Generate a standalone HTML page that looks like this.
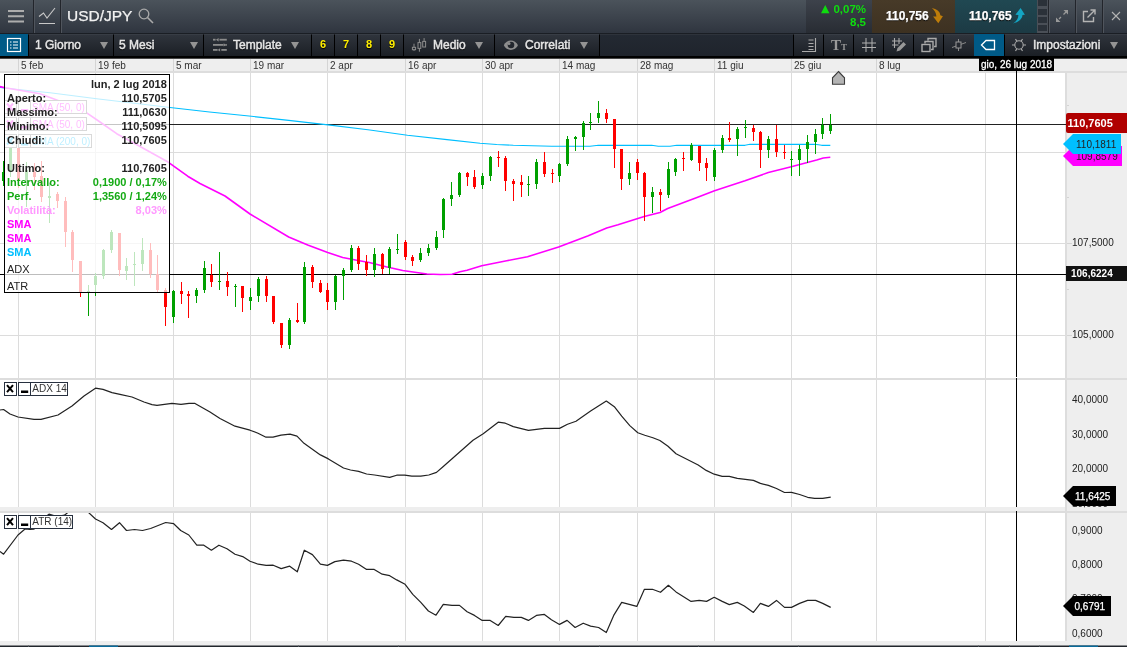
<!DOCTYPE html>
<html><head><meta charset="utf-8"><title>USD/JPY</title>
<style>
html,body{margin:0;padding:0;background:#fff;}
body{width:1127px;height:647px;overflow:hidden;position:relative;font-family:"Liberation Sans",Arial,sans-serif;}
#top{position:absolute;left:0;top:0;width:1127px;height:33px;background:linear-gradient(#4b535b,#2f353f);}
#tb{position:absolute;left:0;top:33px;width:1127px;height:26px;background:#000;border-top:1px solid #1a1e24;box-sizing:border-box;}
#tb:before{content:'';position:absolute;left:0;top:0;width:1127px;height:22px;background:#222831;border-top:1px solid #2e333b;box-sizing:border-box;}
.a{position:absolute;}
div.a,.lbl{will-change:transform;}
.vs{position:absolute;top:0;width:1px;height:33px;background:#22252b;box-shadow:1px 0 0 #50555d;}
.btn{position:absolute;top:0;height:22px;background:linear-gradient(#2f343c,#1b1f25);border-left:1px solid #000;border-top:1px solid #383d45;box-sizing:border-box;}
.btn>*{margin-top:-1px;}
.lbl{position:absolute;top:0;line-height:22px;font-size:12px;color:#e6e6e6;-webkit-text-stroke:0.45px #e6e6e6;text-shadow:0 1px 1px #000;white-space:nowrap;}
.tri{position:absolute;top:8px;margin-left:-1px;width:0;height:0;border-left:4px solid transparent;border-right:4px solid transparent;border-top:7px solid #949494;}
.y{color:#ffee00;font-size:11px;font-weight:bold;-webkit-text-stroke:0;text-align:center;line-height:21px;}
</style></head><body>
<div id="top">
 <svg class="a" style="left:0;top:0" width="130" height="33" viewBox="0 0 130 33">
  <g stroke="#adadad" stroke-width="2"><path d="M8 11H24M8 16.300H24M8 21.600H24"/></g>
  <g stroke="#c8c8c8" stroke-width="1.1" fill="none"><path d="M39 16.5l4.5-3.5 3.5 5 8-10M39 23.5h16"/></g>
 </svg>
 <div class="vs" style="left:33px"></div><div class="vs" style="left:60px"></div>
 <div class="a" style="left:67px;top:4px;font-size:15.5px;line-height:24px;color:#f2f2f2;-webkit-text-stroke:0.25px #f2f2f2">USD/JPY</div>
 <svg class="a" style="left:136px;top:6px" width="20" height="20" viewBox="0 0 20 20"><circle cx="8" cy="8" r="4.8" fill="none" stroke="#aaa" stroke-width="1.3"/><path d="M11.5 11.5L17 17" stroke="#aaa" stroke-width="1.6"/></svg>
 <div class="a" style="left:806px;top:0;width:66px;height:33px;background:linear-gradient(#3d424b,#282c33);"></div>
 <div class="a" style="left:806px;top:2px;width:60px;text-align:right;font-size:11.5px;font-weight:bold;color:#0fdc0f;line-height:14px;letter-spacing:0">0,07%</div>
 <div class="a" style="left:806px;top:14.700px;width:60px;text-align:right;font-size:11.5px;font-weight:bold;color:#0fdc0f;line-height:14px;letter-spacing:0">8,5</div>
 <div class="a" style="left:820.700px;top:1.800px;font-size:11px;line-height:14px;color:#0fdc0f;font-family:'DejaVu Sans',sans-serif">▲</div>
 <div class="a" style="left:871.500px;top:0;width:83px;height:33px;background:linear-gradient(#473a28,#3d3121);"></div>
 <div class="a" style="left:886px;top:7.700px;font-size:12px;line-height:16px;font-weight:bold;color:#fff;-webkit-text-stroke:0.25px #fff;text-shadow:0 1px 1px #000">110,756</div>
 <svg class="a" style="left:930px;top:6px" width="16" height="20" viewBox="0 0 16 20"><path d="M1.800 2.100C6.500 3 10 5.500 10.300 9.300L12.900 10.300L8.300 17.200L3.100 10.500L6.400 10.500C6.300 7 4.500 4.300 1.800 2.100Z" fill="#be7d0a"/></svg>
 <div class="a" style="left:954.500px;top:0;width:81.800px;height:33px;background:linear-gradient(#204852,#1c3a44);"></div>
 <div class="a" style="left:968.600px;top:7.700px;font-size:12px;line-height:16px;font-weight:bold;color:#fff;-webkit-text-stroke:0.25px #fff;text-shadow:0 1px 1px #000">110,765</div>
 <svg class="a" style="left:1012px;top:6px" width="16" height="20" viewBox="0 0 16 20"><path d="M8.600 2.100L12.900 8.800L10.500 9C10.300 13 6.500 16.200 1 17.400C4.500 15.300 6.400 12.500 6.400 9L3.400 8.800Z" fill="#14a5c3"/></svg>
 <div class="a" style="left:1037px;top:0;width:11px;height:33px;background:#4a4f57;"></div>
 <div class="a" style="left:1038px;top:0;width:9px;height:6px;background:#2b3139"></div>
 <div class="a" style="left:1038px;top:9px;width:9px;height:6px;background:#2b3139"></div>
 <div class="a" style="left:1038px;top:17px;width:9px;height:6px;background:#2b3139"></div>
 <div class="a" style="left:1038px;top:25px;width:9px;height:6px;background:#2b3139"></div>
 <div class="vs" style="left:1048px"></div><div class="vs" style="left:1075px"></div><div class="vs" style="left:1102px"></div>
 <svg class="a" style="left:1050px;top:0" width="77" height="33" viewBox="1050 0 77 33" fill="none" stroke="#b4b4b4" stroke-width="1.4">
  <path d="M1063.500 14.500L1066 12M1059 19L1061 17" stroke="#999" stroke-width="1.3"/><path d="M1063.500 10h4.500v4.500zM1056 17.500v4.500h4.500z" fill="#999" stroke="none"/>
  <path d="M1088 11.5h-4.5v10h10V17" /><path d="M1087.5 17.5L1095 10M1090.500 10h4.500v4.500"/>
  <path d="M1112 12l8 8m0-8l-8 8" stroke-width="1.1"/>
 </svg>
</div>
<div id="tb">
 <div class="a" style="left:0;top:0;width:28px;height:22px;background:#005a87"></div>
 <svg class="a" style="left:6px;top:3px" width="16" height="16" viewBox="0 0 16 16"><rect x="1.5" y="1.5" width="13" height="13" fill="none" stroke="#fff" stroke-width="1.2"/><path d="M4 5h1.500M7 5h5M4 8h1.500M7 8h5M4 11h1.500M7 11h5" stroke="#fff" stroke-width="1.2"/></svg>
 <div class="btn" style="left:28px;width:85px"><div class="lbl" style="left:6px">1 Giorno</div><div class="tri" style="left:72px"></div></div>
 <div class="btn" style="left:113px;width:90px"><div class="lbl" style="left:5px">5 Mesi</div><div class="tri" style="left:77px"></div></div>
 <div class="btn" style="left:203px;width:108px">
  <svg class="a" style="left:7px;top:3px" width="17" height="16" viewBox="210 37 17 16" fill="#8c8c8c"><rect x="212" y="38.800" width="2.600" height="1.800"/><path d="M214.900 39.700l2.700-1.700v3.400z"/><rect x="218.500" y="38.800" width="7.300" height="1.800"/>
   <rect x="212" y="44" width="10.500" height="1.800"/><path d="M225.300 44.900l-2.700-1.700v3.400z"/><rect x="224.500" y="44" width="1.300" height="1.800"/>
   <rect x="212" y="49" width="4.600" height="1.800"/><path d="M216.700 49.900l2.400-1.700v3.400z"/><rect x="220.300" y="49" width="5.500" height="1.800"/></svg>
  <div class="lbl" style="left:29px">Template</div><div class="tri" style="left:88px"></div></div>
 <div class="btn" style="left:311px;width:23px"><div class="lbl y" style="left:0;width:22px">6</div></div>
 <div class="btn" style="left:334px;width:23px"><div class="lbl y" style="left:0;width:22px">7</div></div>
 <div class="btn" style="left:357px;width:23px"><div class="lbl y" style="left:0;width:22px">8</div></div>
 <div class="btn" style="left:380px;width:23px"><div class="lbl y" style="left:0;width:22px">9</div></div>
 <div class="btn" style="left:403px;width:91px">
  <svg class="a" style="left:6px;top:3px" width="18" height="16" viewBox="409 37 18 16" stroke="#8c8c8c" stroke-width="1" fill="none"><path d="M413 43.700v7.200M418.400 38.900v12.800M423.100 38.100v9"/><rect x="411.400" y="47.300" width="3.200" height="2.400" fill="#252a31"/><rect x="417" y="42.600" width="2.800" height="5.800" fill="#252a31"/><rect x="421.700" y="41.400" width="2.900" height="5.600" fill="#252a31"/></svg>
  <div class="lbl" style="left:29px">Medio</div><div class="tri" style="left:72px"></div></div>
 <div class="btn" style="left:494px;width:105px">
  <svg class="a" style="left:8px;top:5px" width="16" height="13" viewBox="502 39 16 13"><path d="M502.800 45.300C505.500 39 514.200 39 516.900 45.300C514.200 51.500 505.500 51.500 502.800 45.300Z" fill="#8e8e8e"/><circle cx="510" cy="45" r="3.300" fill="#23272e"/><circle cx="508" cy="43.400" r="1.500" fill="#8e8e8e"/></svg>
  <div class="lbl" style="left:30px">Correlati</div><div class="tri" style="left:86px"></div></div>
 <div class="btn" style="left:599px;width:194px;background:linear-gradient(#232932,#1f242c);border-top-color:#2e333b"></div>
 <div class="btn" style="left:793px;width:30px"><svg class="a" style="left:6px;top:3px" width="18" height="16" viewBox="0 0 18 16" stroke="#aaa" stroke-width="1.1" fill="none"><path d="M8.500 3h5M8.500 6.500h5M8.500 9.500h5M8.500 12.500h5M15.500 1v13.500H2"/></svg></div>
 <div class="btn" style="left:823px;width:30px"><div class="a" style="left:7px;top:2px;font-family:'Liberation Serif',serif;font-weight:bold;color:#9a9a9a;font-size:15px;line-height:18px">T<span style="font-size:9px">T</span></div></div>
 <div class="btn" style="left:853px;width:30px"><svg class="a" style="left:7px;top:3px" width="16" height="16" viewBox="0 0 16 16" stroke="#b0b0b0" stroke-width="1" fill="none"><path d="M5 1v14M11 1v14M1 6h14M1 10.500h14"/></svg></div>
 <div class="btn" style="left:883px;width:30px"><svg class="a" style="left:7px;top:3px" width="17" height="16" viewBox="0 0 17 16" stroke="#aaa" stroke-width="1.1" fill="none"><path d="M3.500 1v10M8 1v6M1 4h10M1 8h6.500"/><path d="M5.500 14.500l1-3.500 6-6 2.500 2.500-6 6z" fill="#999" stroke="none"/></svg></div>
 <div class="btn" style="left:913px;width:30px"><svg class="a" style="left:7px;top:3px" width="17" height="16" viewBox="0 0 17 16" stroke="#aaa" stroke-width="1.4" fill="none"><path d="M7 3.500V1.500h8v8h-2M4 6.500V4.500h8v8h-2"/><rect x="1" y="7.500" width="8" height="7"/></svg></div>
 <div class="btn" style="left:943px;width:31px"><svg class="a" style="left:7px;top:3px" width="17" height="16" viewBox="0 0 17 16" stroke="#999" stroke-width="1" fill="none"><path d="M7.500 2v12M1 10.500L15 5.500" stroke="#888"/><rect x="5" y="5" width="5" height="6" fill="#252930"/></svg></div>
 <div class="a" style="left:974px;top:0;width:30px;height:22px;background:#005a87"></div>
 <svg class="a" style="left:980px;top:5px" width="17" height="12" viewBox="0 0 17 12"><path d="M1.500 6L6 1.500h8.500v9H6z" fill="none" stroke="#fff" stroke-width="1.3"/></svg>
 <div class="btn" style="left:1004px;width:123px">
  <svg class="a" style="left:6px;top:3px" width="16" height="16" viewBox="0 0 16 16" stroke="#aaa" stroke-width="1.1" fill="none"><circle cx="8" cy="8" r="4.200"/><path d="M1 8h2.800M12.200 8h2.800M4.500 2l1.400 2.400M10.100 11.600l1.400 2.400M4.500 14l1.400-2.400M10.100 4.400l1.400-2.400"/></svg>
  <div class="lbl" style="left:28px">Impostazioni</div><div class="tri" style="left:106px"></div></div>
</div>
<svg id="chart" width="1127" height="647" viewBox="0 0 1127 647" style="position:absolute;left:0;top:0;will-change:transform" font-family="Liberation Sans, Arial, sans-serif">
<rect x="0" y="58" width="1127" height="589" fill="#fff"/>
<rect x="0" y="58" width="1127" height="13" fill="#eee"/><rect x="0" y="58" width="1127" height="1" fill="#474747"/>
<rect x="0" y="71" width="1127" height="2" fill="#ddd"/>
<rect x="18" y="59" width="1" height="12" fill="#d4d4d4"/>
<rect x="18" y="73" width="1" height="568" fill="#dcdcdc"/>
<rect x="95" y="59" width="1" height="12" fill="#d4d4d4"/>
<rect x="95" y="73" width="1" height="568" fill="#dcdcdc"/>
<rect x="173" y="59" width="1" height="12" fill="#d4d4d4"/>
<rect x="173" y="73" width="1" height="568" fill="#dcdcdc"/>
<rect x="250" y="59" width="1" height="12" fill="#d4d4d4"/>
<rect x="250" y="73" width="1" height="568" fill="#dcdcdc"/>
<rect x="327" y="59" width="1" height="12" fill="#d4d4d4"/>
<rect x="327" y="73" width="1" height="568" fill="#dcdcdc"/>
<rect x="405" y="59" width="1" height="12" fill="#d4d4d4"/>
<rect x="405" y="73" width="1" height="568" fill="#dcdcdc"/>
<rect x="482" y="59" width="1" height="12" fill="#d4d4d4"/>
<rect x="482" y="73" width="1" height="568" fill="#dcdcdc"/>
<rect x="559" y="59" width="1" height="12" fill="#d4d4d4"/>
<rect x="559" y="73" width="1" height="568" fill="#dcdcdc"/>
<rect x="637" y="59" width="1" height="12" fill="#d4d4d4"/>
<rect x="637" y="73" width="1" height="568" fill="#dcdcdc"/>
<rect x="714" y="59" width="1" height="12" fill="#d4d4d4"/>
<rect x="714" y="73" width="1" height="568" fill="#dcdcdc"/>
<rect x="791" y="59" width="1" height="12" fill="#d4d4d4"/>
<rect x="791" y="73" width="1" height="568" fill="#dcdcdc"/>
<rect x="876" y="59" width="1" height="12" fill="#d4d4d4"/>
<rect x="876" y="73" width="1" height="568" fill="#dcdcdc"/>
<rect x="985" y="59" width="1" height="12" fill="#d4d4d4"/>
<rect x="985" y="73" width="1" height="568" fill="#dcdcdc"/>
<rect x="0" y="152" width="1065" height="1" fill="#dcdcdc"/>
<rect x="0" y="243" width="1065" height="1" fill="#dcdcdc"/>
<rect x="0" y="335" width="1065" height="1" fill="#dcdcdc"/>
<text x="21" y="68.5" font-size="10" fill="#333">5 feb</text>
<text x="98" y="68.5" font-size="10" fill="#333">19 feb</text>
<text x="176" y="68.5" font-size="10" fill="#333">5 mar</text>
<text x="253" y="68.5" font-size="10" fill="#333">19 mar</text>
<text x="330" y="68.5" font-size="10" fill="#333">2 apr</text>
<text x="408" y="68.5" font-size="10" fill="#333">16 apr</text>
<text x="485" y="68.5" font-size="10" fill="#333">30 apr</text>
<text x="562" y="68.5" font-size="10" fill="#333">14 mag</text>
<text x="640" y="68.5" font-size="10" fill="#333">28 mag</text>
<text x="717" y="68.5" font-size="10" fill="#333">11 giu</text>
<text x="794" y="68.5" font-size="10" fill="#333">25 giu</text>
<text x="879" y="68.5" font-size="10" fill="#333">8 lug</text>
<rect x="0" y="124" width="1066" height="1" fill="#222"/>
<rect x="0" y="274" width="1066" height="1" fill="#000"/>
<polyline points="0.0,87.5 25.0,90.3 50.0,92.8 96.7,98.7 170.0,107.5 209.5,112.0 249.0,116.0 288.7,120.4 328.0,124.9 368.0,129.8 407.5,135.2 447.0,139.6 480.0,143.3 496.7,144.5 513.3,145.3 551.7,146.2 590.0,146.2 598.3,145.3 651.7,145.3 658.3,146.2 670.0,146.2 676.7,145.3 745.0,145.3 750.0,144.3 815.0,144.3 821.7,145.3 830.3,145.3" fill="none" stroke="#00bfff" stroke-width="1.15" stroke-linejoin="round" />
<polyline points="0.0,86.6 5.0,87.8 40.0,93.7 66.7,103.7 86.7,112.8 100.0,122.0 116.7,133.7 133.3,142.8 150.0,152.0 166.7,161.2 187.7,176.2 200.0,183.5 225.0,196.0 250.0,214.0 288.7,237.0 307.7,245.0 327.7,252.5 342.7,257.5 358.0,260.5 369.3,262.5 386.0,266.7 402.7,270.5 418.3,272.8 427.0,274.0 440.0,274.5 452.0,274.2 460.0,271.7 467.0,270.2 481.7,265.8 506.7,260.8 527.5,256.7 558.6,247.0 588.3,235.7 606.7,228.0 618.0,224.8 644.2,216.5 660.0,212.5 667.7,208.5 697.0,197.6 714.5,190.8 745.0,180.8 768.3,172.5 791.3,166.7 816.7,160.0 823.3,158.0 830.3,157.3" fill="none" stroke="#ff00ff" stroke-width="1.6" stroke-linejoin="round" />
<g shape-rendering="crispEdges">
<rect x="3" y="161" width="1" height="25" fill="#00a000"/><rect x="2" y="172" width="3" height="9" fill="#00a000"/>
<rect x="10" y="146" width="1" height="31" fill="#00a000"/><rect x="9" y="148" width="3" height="24" fill="#00a000"/>
<rect x="18" y="148" width="1" height="40" fill="#ff0000"/><rect x="17" y="148" width="3" height="32" fill="#ff0000"/>
<rect x="26" y="162" width="1" height="45" fill="#00a000"/><rect x="25" y="170" width="3" height="13" fill="#00a000"/>
<rect x="34" y="163" width="1" height="27" fill="#ff0000"/><rect x="33" y="172" width="3" height="5" fill="#ff0000"/>
<rect x="41" y="161" width="1" height="41" fill="#ff0000"/><rect x="40" y="176" width="3" height="21" fill="#ff0000"/>
<rect x="49" y="183" width="1" height="40" fill="#00a000"/><rect x="48" y="196" width="3" height="2" fill="#00a000"/>
<rect x="57" y="192" width="1" height="16" fill="#ff0000"/><rect x="56" y="194" width="3" height="7" fill="#ff0000"/>
<rect x="65" y="197" width="1" height="50" fill="#ff0000"/><rect x="64" y="201" width="3" height="31" fill="#ff0000"/>
<rect x="72" y="230" width="1" height="42" fill="#ff0000"/><rect x="71" y="232" width="3" height="28" fill="#ff0000"/>
<rect x="80" y="261" width="1" height="36" fill="#ff0000"/><rect x="79" y="261" width="3" height="32" fill="#ff0000"/>
<rect x="88" y="285" width="1" height="31" fill="#00a000"/><rect x="87" y="291" width="3" height="1" fill="#00a000"/>
<rect x="95" y="273" width="1" height="23" fill="#00a000"/><rect x="94" y="276" width="3" height="9" fill="#00a000"/>
<rect x="103" y="249" width="1" height="30" fill="#00a000"/><rect x="102" y="250" width="3" height="26" fill="#00a000"/>
<rect x="111" y="230" width="1" height="23" fill="#00a000"/><rect x="110" y="232" width="3" height="18" fill="#00a000"/>
<rect x="119" y="233" width="1" height="43" fill="#ff0000"/><rect x="118" y="233" width="3" height="37" fill="#ff0000"/>
<rect x="126" y="258" width="1" height="22" fill="#00a000"/><rect x="125" y="266" width="3" height="5" fill="#00a000"/>
<rect x="134" y="252" width="1" height="34" fill="#00a000"/><rect x="133" y="264" width="3" height="1" fill="#00a000"/>
<rect x="142" y="238" width="1" height="33" fill="#00a000"/><rect x="141" y="250" width="3" height="14" fill="#00a000"/>
<rect x="150" y="243" width="1" height="35" fill="#ff0000"/><rect x="149" y="250" width="3" height="24" fill="#ff0000"/>
<rect x="157" y="255" width="1" height="37" fill="#ff0000"/><rect x="156" y="274" width="3" height="16" fill="#ff0000"/>
<rect x="165" y="288" width="1" height="38" fill="#ff0000"/><rect x="164" y="290" width="3" height="17" fill="#ff0000"/>
<rect x="173" y="290" width="1" height="33" fill="#00a000"/><rect x="172" y="291" width="3" height="26" fill="#00a000"/>
<rect x="181" y="282" width="1" height="22" fill="#ff0000"/><rect x="180" y="291" width="3" height="3" fill="#ff0000"/>
<rect x="188" y="291" width="1" height="27" fill="#ff0000"/><rect x="187" y="294" width="3" height="2" fill="#ff0000"/>
<rect x="196" y="288" width="1" height="15" fill="#00a000"/><rect x="195" y="290" width="3" height="6" fill="#00a000"/>
<rect x="204" y="261" width="1" height="32" fill="#00a000"/><rect x="203" y="268" width="3" height="22" fill="#00a000"/>
<rect x="211" y="264" width="1" height="23" fill="#ff0000"/><rect x="210" y="275" width="3" height="7" fill="#ff0000"/>
<rect x="219" y="252" width="1" height="38" fill="#00a000"/><rect x="218" y="281" width="3" height="1" fill="#00a000"/>
<rect x="227" y="272" width="1" height="24" fill="#ff0000"/><rect x="226" y="281" width="3" height="6" fill="#ff0000"/>
<rect x="235" y="284" width="1" height="23" fill="#00a000"/><rect x="234" y="286" width="3" height="1" fill="#00a000"/>
<rect x="242" y="286" width="1" height="26" fill="#ff0000"/><rect x="241" y="286" width="3" height="12" fill="#ff0000"/>
<rect x="250" y="288" width="1" height="22" fill="#00a000"/><rect x="249" y="297" width="3" height="4" fill="#00a000"/>
<rect x="258" y="277" width="1" height="25" fill="#00a000"/><rect x="257" y="279" width="3" height="17" fill="#00a000"/>
<rect x="266" y="276" width="1" height="26" fill="#ff0000"/><rect x="265" y="279" width="3" height="17" fill="#ff0000"/>
<rect x="273" y="296" width="1" height="28" fill="#ff0000"/><rect x="272" y="296" width="3" height="26" fill="#ff0000"/>
<rect x="281" y="323" width="1" height="25" fill="#ff0000"/><rect x="280" y="323" width="3" height="22" fill="#ff0000"/>
<rect x="289" y="318" width="1" height="31" fill="#00a000"/><rect x="288" y="320" width="3" height="25" fill="#00a000"/>
<rect x="297" y="303" width="1" height="20" fill="#ff0000"/><rect x="296" y="320" width="3" height="2" fill="#ff0000"/>
<rect x="304" y="262" width="1" height="62" fill="#00a000"/><rect x="303" y="267" width="3" height="55" fill="#00a000"/>
<rect x="312" y="265" width="1" height="23" fill="#ff0000"/><rect x="311" y="267" width="3" height="15" fill="#ff0000"/>
<rect x="320" y="280" width="1" height="13" fill="#ff0000"/><rect x="319" y="283" width="3" height="9" fill="#ff0000"/>
<rect x="327" y="283" width="1" height="27" fill="#ff0000"/><rect x="326" y="290" width="3" height="12" fill="#ff0000"/>
<rect x="335" y="275" width="1" height="35" fill="#00a000"/><rect x="334" y="276" width="3" height="26" fill="#00a000"/>
<rect x="343" y="268" width="1" height="32" fill="#00a000"/><rect x="342" y="270" width="3" height="6" fill="#00a000"/>
<rect x="351" y="245" width="1" height="27" fill="#00a000"/><rect x="350" y="248" width="3" height="22" fill="#00a000"/>
<rect x="358" y="246" width="1" height="24" fill="#ff0000"/><rect x="357" y="248" width="3" height="16" fill="#ff0000"/>
<rect x="366" y="255" width="1" height="21" fill="#ff0000"/><rect x="365" y="262" width="3" height="8" fill="#ff0000"/>
<rect x="374" y="248" width="1" height="29" fill="#00a000"/><rect x="373" y="254" width="3" height="16" fill="#00a000"/>
<rect x="382" y="253" width="1" height="21" fill="#ff0000"/><rect x="381" y="254" width="3" height="15" fill="#ff0000"/>
<rect x="389" y="247" width="1" height="27" fill="#00a000"/><rect x="388" y="249" width="3" height="19" fill="#00a000"/>
<rect x="397" y="234" width="1" height="20" fill="#00a000"/><rect x="396" y="249" width="3" height="1" fill="#00a000"/>
<rect x="405" y="240" width="1" height="20" fill="#ff0000"/><rect x="404" y="242" width="3" height="15" fill="#ff0000"/>
<rect x="412" y="255" width="1" height="11" fill="#ff0000"/><rect x="411" y="257" width="3" height="4" fill="#ff0000"/>
<rect x="420" y="248" width="1" height="14" fill="#00a000"/><rect x="419" y="253" width="3" height="7" fill="#00a000"/>
<rect x="428" y="244" width="1" height="12" fill="#00a000"/><rect x="427" y="248" width="3" height="5" fill="#00a000"/>
<rect x="436" y="231" width="1" height="19" fill="#00a000"/><rect x="435" y="237" width="3" height="11" fill="#00a000"/>
<rect x="443" y="198" width="1" height="40" fill="#00a000"/><rect x="442" y="199" width="3" height="31" fill="#00a000"/>
<rect x="451" y="182" width="1" height="24" fill="#00a000"/><rect x="450" y="195" width="3" height="4" fill="#00a000"/>
<rect x="459" y="172" width="1" height="25" fill="#00a000"/><rect x="458" y="173" width="3" height="22" fill="#00a000"/>
<rect x="467" y="172" width="1" height="14" fill="#ff0000"/><rect x="466" y="173" width="3" height="4" fill="#ff0000"/>
<rect x="474" y="170" width="1" height="19" fill="#ff0000"/><rect x="473" y="177" width="3" height="10" fill="#ff0000"/>
<rect x="482" y="173" width="1" height="16" fill="#00a000"/><rect x="481" y="176" width="3" height="9" fill="#00a000"/>
<rect x="490" y="156" width="1" height="25" fill="#00a000"/><rect x="489" y="157" width="3" height="19" fill="#00a000"/>
<rect x="498" y="151" width="1" height="16" fill="#ff0000"/><rect x="497" y="157" width="3" height="1" fill="#ff0000"/>
<rect x="505" y="156" width="1" height="35" fill="#ff0000"/><rect x="504" y="158" width="3" height="23" fill="#ff0000"/>
<rect x="513" y="179" width="1" height="22" fill="#ff0000"/><rect x="512" y="181" width="3" height="3" fill="#ff0000"/>
<rect x="521" y="175" width="1" height="22" fill="#ff0000"/><rect x="520" y="182" width="3" height="3" fill="#ff0000"/>
<rect x="528" y="176" width="1" height="20" fill="#00a000"/><rect x="527" y="184" width="3" height="1" fill="#00a000"/>
<rect x="536" y="159" width="1" height="30" fill="#00a000"/><rect x="535" y="162" width="3" height="22" fill="#00a000"/>
<rect x="544" y="152" width="1" height="25" fill="#ff0000"/><rect x="543" y="162" width="3" height="12" fill="#ff0000"/>
<rect x="552" y="169" width="1" height="14" fill="#ff0000"/><rect x="551" y="173" width="3" height="1" fill="#ff0000"/>
<rect x="559" y="163" width="1" height="19" fill="#00a000"/><rect x="558" y="164" width="3" height="12" fill="#00a000"/>
<rect x="567" y="136" width="1" height="30" fill="#00a000"/><rect x="566" y="139" width="3" height="25" fill="#00a000"/>
<rect x="575" y="136" width="1" height="15" fill="#00a000"/><rect x="574" y="137" width="3" height="2" fill="#00a000"/>
<rect x="583" y="121" width="1" height="29" fill="#00a000"/><rect x="582" y="123" width="3" height="14" fill="#00a000"/>
<rect x="590" y="113" width="1" height="17" fill="#00a000"/><rect x="589" y="122" width="3" height="1" fill="#00a000"/>
<rect x="598" y="101" width="1" height="22" fill="#00a000"/><rect x="597" y="113" width="3" height="5" fill="#00a000"/>
<rect x="606" y="109" width="1" height="14" fill="#ff0000"/><rect x="605" y="113" width="3" height="6" fill="#ff0000"/>
<rect x="614" y="119" width="1" height="49" fill="#ff0000"/><rect x="613" y="119" width="3" height="30" fill="#ff0000"/>
<rect x="621" y="149" width="1" height="41" fill="#ff0000"/><rect x="620" y="149" width="3" height="30" fill="#ff0000"/>
<rect x="629" y="162" width="1" height="23" fill="#00a000"/><rect x="628" y="173" width="3" height="6" fill="#00a000"/>
<rect x="637" y="159" width="1" height="21" fill="#ff0000"/><rect x="636" y="162" width="3" height="11" fill="#ff0000"/>
<rect x="644" y="172" width="1" height="49" fill="#ff0000"/><rect x="643" y="173" width="3" height="24" fill="#ff0000"/>
<rect x="652" y="187" width="1" height="26" fill="#00a000"/><rect x="651" y="192" width="3" height="5" fill="#00a000"/>
<rect x="660" y="189" width="1" height="22" fill="#ff0000"/><rect x="659" y="192" width="3" height="3" fill="#ff0000"/>
<rect x="668" y="162" width="1" height="36" fill="#00a000"/><rect x="667" y="169" width="3" height="26" fill="#00a000"/>
<rect x="675" y="158" width="1" height="18" fill="#00a000"/><rect x="674" y="159" width="3" height="13" fill="#00a000"/>
<rect x="683" y="152" width="1" height="19" fill="#ff0000"/><rect x="682" y="158" width="3" height="1" fill="#ff0000"/>
<rect x="691" y="143" width="1" height="18" fill="#00a000"/><rect x="690" y="145" width="3" height="15" fill="#00a000"/>
<rect x="699" y="146" width="1" height="25" fill="#ff0000"/><rect x="698" y="146" width="3" height="17" fill="#ff0000"/>
<rect x="706" y="158" width="1" height="23" fill="#ff0000"/><rect x="705" y="163" width="3" height="5" fill="#ff0000"/>
<rect x="714" y="148" width="1" height="33" fill="#00a000"/><rect x="713" y="150" width="3" height="27" fill="#00a000"/>
<rect x="722" y="135" width="1" height="18" fill="#00a000"/><rect x="721" y="138" width="3" height="12" fill="#00a000"/>
<rect x="729" y="122" width="1" height="20" fill="#ff0000"/><rect x="728" y="138" width="3" height="2" fill="#ff0000"/>
<rect x="737" y="127" width="1" height="29" fill="#00a000"/><rect x="736" y="129" width="3" height="10" fill="#00a000"/>
<rect x="745" y="120" width="1" height="18" fill="#00a000"/><rect x="744" y="127" width="3" height="1" fill="#00a000"/>
<rect x="753" y="125" width="1" height="16" fill="#ff0000"/><rect x="752" y="128" width="3" height="4" fill="#ff0000"/>
<rect x="760" y="131" width="1" height="37" fill="#ff0000"/><rect x="759" y="132" width="3" height="18" fill="#ff0000"/>
<rect x="768" y="136" width="1" height="22" fill="#00a000"/><rect x="767" y="139" width="3" height="11" fill="#00a000"/>
<rect x="776" y="125" width="1" height="32" fill="#ff0000"/><rect x="775" y="139" width="3" height="13" fill="#ff0000"/>
<rect x="784" y="145" width="1" height="14" fill="#ff0000"/><rect x="783" y="152" width="3" height="1" fill="#ff0000"/>
<rect x="791" y="151" width="1" height="25" fill="#00a000"/><rect x="790" y="159" width="3" height="1" fill="#00a000"/>
<rect x="799" y="145" width="1" height="31" fill="#00a000"/><rect x="798" y="149" width="3" height="11" fill="#00a000"/>
<rect x="807" y="135" width="1" height="28" fill="#00a000"/><rect x="806" y="142" width="3" height="7" fill="#00a000"/>
<rect x="815" y="129" width="1" height="25" fill="#00a000"/><rect x="814" y="134" width="3" height="8" fill="#00a000"/>
<rect x="822" y="118" width="1" height="21" fill="#00a000"/><rect x="821" y="125" width="3" height="9" fill="#00a000"/>
<rect x="830" y="114" width="1" height="20" fill="#00a000"/><rect x="829" y="125" width="3" height="6" fill="#00a000"/>
</g>
<path d="M838.5 71.500 L844.500 77.800 V84.200 H832.500 V77.800 Z" fill="#b4b4b4" stroke="#3c3c3c" stroke-width="1.1"/>
<g font-size="10" fill="#ff00ff"><rect x="4.5" y="100.5" width="12" height="13" fill="#fff" stroke="#6e6e6e"/><rect x="18.5" y="100.5" width="12" height="13" fill="#fff" stroke="#6e6e6e"/><rect x="30.5" y="100.5" width="56" height="13" fill="#fff" stroke="#6e6e6e"/><path d="M7 103.5 l6 7 m0 -7 l-6 7" stroke="#ff00ff" stroke-width="2" fill="none"/><rect x="21" y="109" width="7.200" height="2.500"/><text x="32" y="110.5">SMA (50, 0)</text></g>
<g font-size="10" fill="#ff00ff"><rect x="4.5" y="117.5" width="12" height="13" fill="#fff" stroke="#6e6e6e"/><rect x="18.5" y="117.5" width="12" height="13" fill="#fff" stroke="#6e6e6e"/><rect x="30.5" y="117.5" width="56" height="13" fill="#fff" stroke="#6e6e6e"/><path d="M7 120.5 l6 7 m0 -7 l-6 7" stroke="#ff00ff" stroke-width="2" fill="none"/><rect x="21" y="126" width="7.200" height="2.500"/><text x="32" y="127.5">SMA (50, 0)</text></g>
<g font-size="10" fill="#00bfff"><rect x="4.5" y="134.5" width="12" height="13" fill="#fff" stroke="#6e6e6e"/><rect x="18.5" y="134.5" width="12" height="13" fill="#fff" stroke="#6e6e6e"/><rect x="30.5" y="134.5" width="61" height="13" fill="#fff" stroke="#6e6e6e"/><path d="M7 137.5 l6 7 m0 -7 l-6 7" stroke="#00bfff" stroke-width="2" fill="none"/><rect x="21" y="143" width="7.200" height="2.500"/><text x="32" y="144.5">SMA (200, 0)</text></g>
<rect x="4.5" y="74.5" width="165" height="218" fill="#fff" fill-opacity="0.74" stroke="#000" stroke-width="1"/>
<g font-size="11" font-weight="bold">
<text x="166.800" y="87.5" fill="#222" text-anchor="end">lun, 2 lug 2018</text>
<text x="7" y="101.5" fill="#222">Aperto:</text>
<text x="166.800" y="101.5" fill="#222" text-anchor="end">110,5705</text>
<text x="7" y="115.5" fill="#222">Massimo:</text>
<text x="166.800" y="115.5" fill="#222" text-anchor="end">111,0630</text>
<text x="7" y="129.5" fill="#222">Minimo:</text>
<text x="166.800" y="129.5" fill="#222" text-anchor="end">110,5095</text>
<text x="7" y="143.5" fill="#222">Chiudi:</text>
<text x="166.800" y="143.5" fill="#222" text-anchor="end">110,7605</text>
<text x="7" y="171.5" fill="#222">Ultimo:</text>
<text x="166.800" y="171.5" fill="#222" text-anchor="end">110,7605</text>
<text x="7" y="185.5" fill="#14aa14">Intervallo:</text>
<text x="166.800" y="185.5" fill="#14aa14" text-anchor="end">0,1900 / 0,17%</text>
<text x="7" y="199.5" fill="#14aa14">Perf.</text>
<text x="166.800" y="199.5" fill="#14aa14" text-anchor="end">1,3560 / 1,24%</text>
<text x="7" y="213.5" fill="#ff99ff">Volatilità:</text>
<text x="166.800" y="213.5" fill="#ff99ff" text-anchor="end">8,03%</text>
<text x="7" y="227.5" fill="#ff00ff">SMA</text>
<text x="7" y="241.5" fill="#ff00ff">SMA</text>
<text x="7" y="255.5" fill="#00bfff">SMA</text>
</g>
<text x="7" y="273" font-size="11" fill="#222">ADX</text><text x="7" y="290" font-size="11" fill="#222">ATR</text>
<rect x="0" y="378" width="1127" height="2" fill="#ddd"/>
<rect x="0" y="507" width="1127" height="4" fill="#eee"/><rect x="0" y="511" width="1127" height="2" fill="#ddd"/>
<rect x="0" y="641" width="1127" height="5" fill="#eee"/><rect x="0" y="646" width="1127" height="1" fill="#22262c"/>
<rect x="0" y="645.500" width="1127" height="1.500" fill="#22262c"/><rect x="89" y="645.500" width="29" height="1.500" fill="#0a6a99"/><rect x="1069" y="645.500" width="29" height="1.500" fill="#0a6a99"/>
<rect x="28" y="645.500" width="1" height="1.500" fill="#50555c"/>
<rect x="59" y="645.500" width="1" height="1.500" fill="#50555c"/>
<rect x="298" y="645.500" width="1" height="1.500" fill="#50555c"/>
<rect x="398" y="645.500" width="1" height="1.500" fill="#50555c"/>
<rect x="599" y="645.500" width="1" height="1.500" fill="#50555c"/>
<rect x="698" y="645.500" width="1" height="1.500" fill="#50555c"/>
<rect x="798" y="645.500" width="1" height="1.500" fill="#50555c"/>
<rect x="978" y="645.500" width="1" height="1.500" fill="#50555c"/>
<rect x="1009" y="645.500" width="1" height="1.500" fill="#50555c"/>
<rect x="1039" y="645.500" width="1" height="1.500" fill="#50555c"/>
<clipPath id="c1"><rect x="0" y="380" width="1065" height="127"/></clipPath><clipPath id="c2"><rect x="0" y="513" width="1065" height="128"/></clipPath>
<polyline points="0.0,410.0 3.6,409.5 10.0,414.0 18.0,417.0 34.0,419.4 41.0,419.4 58.0,415.0 72.0,406.0 84.0,396.0 95.5,388.2 103.0,389.4 112.0,392.6 120.0,394.4 132.0,397.0 144.0,402.0 152.0,404.6 157.0,405.4 172.0,403.4 181.0,404.4 189.0,403.4 195.0,403.4 210.0,412.0 220.0,418.5 235.0,426.2 250.0,430.2 258.0,433.2 266.0,437.2 273.0,437.2 281.0,435.2 290.0,434.2 297.0,436.2 304.0,443.3 320.4,454.9 328.4,458.9 343.5,468.0 350.5,470.0 358.6,471.4 366.6,474.0 374.6,475.0 389.7,477.4 396.7,475.2 404.7,475.2 411.8,476.2 420.8,476.2 428.8,475.0 436.5,472.4 443.0,466.8 473.0,440.3 483.2,433.8 498.2,422.2 505.3,423.2 513.3,426.6 528.4,430.4 544.4,428.4 559.5,428.4 567.5,424.2 576.0,421.2 590.6,411.1 606.3,401.1 614.7,407.1 621.7,416.2 629.8,425.6 637.8,432.8 644.8,435.2 652.9,437.7 659.9,440.5 668.0,446.3 676.0,453.7 698.2,465.0 706.2,470.4 714.2,474.2 722.2,476.4 729.3,476.4 737.3,478.4 753.4,480.4 760.4,483.4 768.4,485.4 776.5,488.5 784.5,492.5 791.5,492.3 799.6,494.5 807.6,497.3 814.6,498.3 822.7,498.3 830.7,497.1" fill="none" stroke="#222" stroke-width="1.2" stroke-linejoin="round" clip-path="url(#c1)"/>
<polyline points="0.0,551.6 3.6,554.2 18.0,535.0 25.0,529.0 30.0,529.3 34.0,529.2 41.0,520.0 49.0,514.2 57.0,516.5 64.5,515.2 69.0,511.5 72.0,508.0 80.0,504.0 88.0,512.0 95.5,519.0 103.0,522.7 111.5,529.5 119.5,522.7 126.5,530.5 134.5,529.5 142.5,530.5 150.6,528.5 165.7,522.5 173.7,523.7 180.7,530.5 188.8,535.0 196.8,545.2 203.8,545.2 211.4,550.2 218.9,545.2 227.0,548.7 235.0,554.2 242.7,556.6 250.0,561.2 258.2,564.2 266.2,565.4 273.2,565.2 281.2,568.6 289.7,566.2 297.3,571.8 304.3,550.2 312.4,554.6 320.4,564.2 327.4,565.4 334.9,561.6 343.5,560.2 351.5,561.2 358.6,564.2 366.6,569.4 374.2,569.4 382.2,574.2 389.7,575.7 396.7,579.9 405.1,584.3 412.8,594.3 420.8,602.4 428.4,611.0 436.0,615.2 443.3,604.4 452.0,605.4 459.5,605.4 467.1,611.8 474.5,615.4 482.2,620.4 490.2,620.4 498.2,625.5 505.7,616.4 513.9,617.4 521.3,617.4 528.4,620.4 536.4,615.4 544.4,614.4 551.4,619.8 559.5,624.4 567.1,620.4 575.1,627.5 583.2,623.2 590.6,626.1 598.6,627.5 606.3,632.5 613.7,615.4 621.7,602.4 636.8,606.4 644.4,589.3 652.4,589.3 660.5,592.3 668.4,585.3 676.0,591.9 691.1,601.4 699.2,600.4 706.6,601.4 714.2,597.3 722.2,601.4 729.3,604.6 737.3,602.4 744.3,606.0 753.4,612.4 760.4,603.4 768.4,606.4 776.5,600.4 784.5,607.4 791.5,607.4 799.6,603.4 807.6,600.4 815.6,600.4 822.7,603.4 830.7,607.4" fill="none" stroke="#222" stroke-width="1.2" stroke-linejoin="round" clip-path="url(#c2)"/>
<g font-size="10" fill="#333"><rect x="4.5" y="382.5" width="12" height="13" fill="#fff" stroke="#27303f"/><rect x="18.5" y="382.5" width="12" height="13" fill="#fff" stroke="#27303f"/><rect x="30.5" y="382.5" width="37" height="13" fill="#fff" stroke="#27303f"/><path d="M7 385.2 l6 7 m0 -7 l-6 7" stroke="#000" stroke-width="2" fill="none"/><rect x="21" y="390.5" width="7.2" height="2.5" fill="#000"/><text x="32.300" y="391.7">ADX 14</text></g>
<g font-size="10" fill="#333"><rect x="4.5" y="515.5" width="12" height="13" fill="#fff" stroke="#27303f"/><rect x="18.5" y="515.5" width="12" height="13" fill="#fff" stroke="#27303f"/><rect x="30.5" y="515.5" width="42" height="13" fill="#fff" stroke="#27303f"/><path d="M7 518.2 l6 7 m0 -7 l-6 7" stroke="#000" stroke-width="2" fill="none"/><rect x="21" y="523.5" width="7.2" height="2.5" fill="#000"/><text x="32.300" y="524.7">ATR (14)</text></g>
<rect x="1016" y="71" width="1" height="306" fill="#000"/><rect x="1016" y="378" width="1" height="129" fill="#000"/><rect x="1016" y="511" width="1" height="130" fill="#000"/>
<rect x="979" y="58" width="75" height="13" fill="#000"/><text x="981" y="67.5" font-size="10" fill="#fff" stroke="#fff" stroke-width="0.3">gio, 26 lug 2018</text>
<rect x="1065" y="73" width="62" height="568" fill="#eee"/><rect x="1065" y="59" width="62" height="12" fill="#eee"/>
<rect x="1065" y="73" width="2" height="568" fill="#ddd"/>
<rect x="1065" y="378" width="62" height="2" fill="#ddd"/><rect x="1065" y="511" width="62" height="2" fill="#ddd"/>
<rect x="1067" y="152" width="5" height="1" fill="#d4d4d4"/>
<rect x="1067" y="243" width="5" height="1" fill="#d4d4d4"/>
<rect x="1067" y="335" width="5" height="1" fill="#d4d4d4"/>
<rect x="1067" y="105" width="2" height="1" fill="#d4d4d4"/>
<rect x="1067" y="197" width="2" height="1" fill="#d4d4d4"/>
<rect x="1067" y="289" width="2" height="1" fill="#d4d4d4"/>
<g font-size="10" fill="#222">
<text x="1072" y="246.2">107,5000</text>
<text x="1072" y="338.2">105,0000</text>
<text x="1072" y="403">40,0000</text>
<text x="1072" y="438">30,0000</text>
<text x="1072" y="472">20,0000</text>
<text x="1072" y="534">0,9000</text>
<text x="1072" y="568">0,8000</text>
<text x="1072" y="602">0,7000</text>
<text x="1072" y="636.5">0,6000</text>
<clipPath id="c3"><rect x="1065" y="380" width="62" height="127.600"/></clipPath><text x="1072" y="507" clip-path="url(#c3)">10,0000</text>
</g>
<path d="M1066 115 q0 -2 2 -2 H1127 V133 H1068 q-2 0 -2 -2 Z" fill="#b00000"/><text x="1067.5" y="127" font-size="11" font-weight="bold" fill="#fff">110,7605</text>
<path d="M1063 156 L1073 146 H1122 V166 H1073 Z" fill="#ff00ff"/><text x="1076" y="159.5" font-size="10" fill="#222">109,8579</text>
<path d="M1063 144 L1073 134 H1121 V154 H1073 Z" fill="#00bfff"/><text x="1076" y="148" font-size="10" fill="#222">110,1811</text>
<rect x="1065" y="124" width="1" height="1" fill="#222"/><rect x="1065" y="274" width="1" height="1" fill="#000"/><rect x="1066" y="266" width="61" height="15" fill="#111"/><text x="1071" y="277" font-size="10" font-weight="bold" fill="#fff">106,6224</text>
<path d="M1063 496 L1073 486 H1116 V506 H1073 Z" fill="#000"/><text x="1075" y="500.300" font-size="10" fill="#fff" stroke="#fff" stroke-width="0.25">11,6425</text>
<path d="M1063 606 L1073 596 H1111 V616 H1073 Z" fill="#000"/><text x="1074.500" y="610" font-size="10" fill="#fff" stroke="#fff" stroke-width="0.25">0,6791</text>
</svg>
</body></html>
